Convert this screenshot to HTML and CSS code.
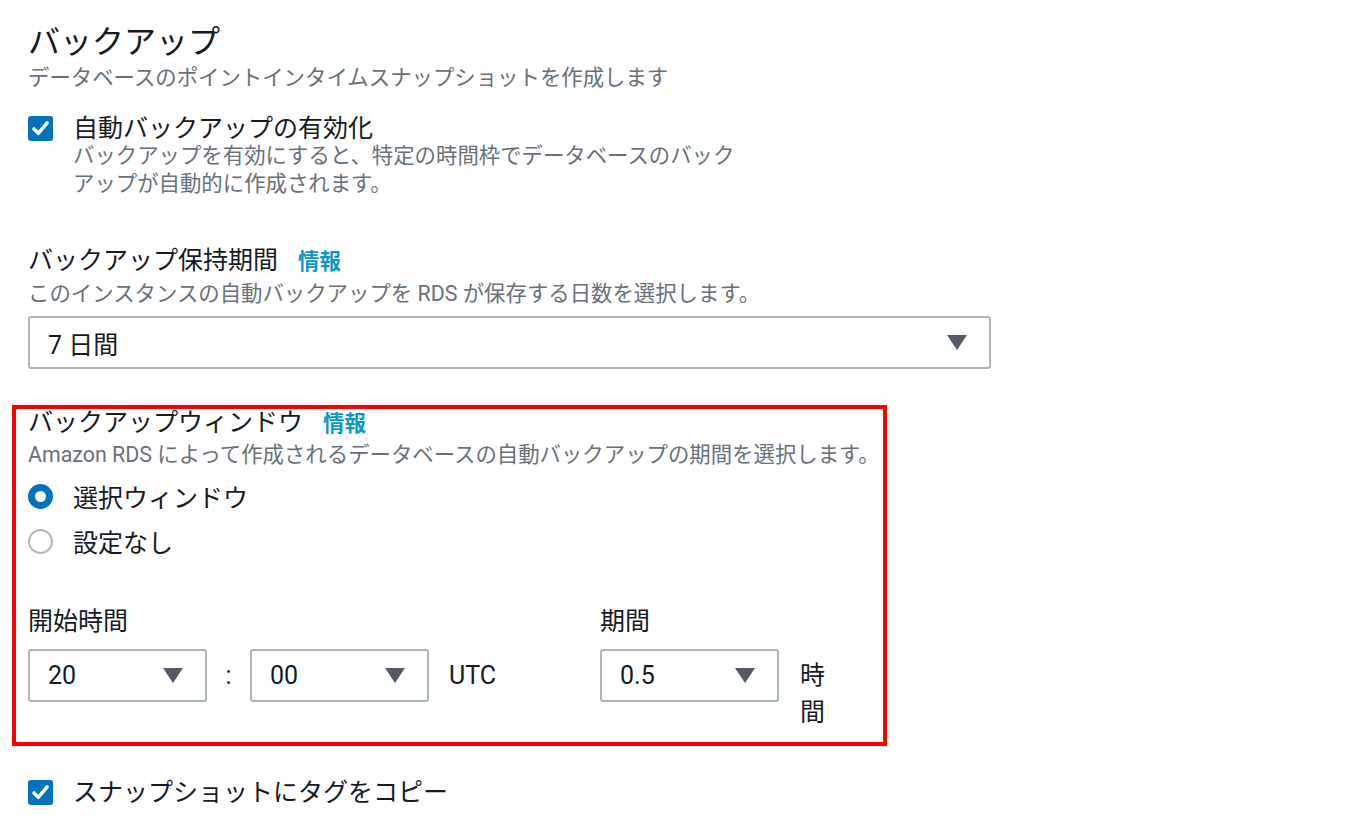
FILE: index.html
```html
<!DOCTYPE html>
<html lang="ja">
<head>
<meta charset="utf-8">
<title>バックアップ</title>
<link rel="stylesheet" href="styles.css">
</head>
<body>
<main class="page">
  <h1 class="title">バックアップ</h1>
  <p class="subtitle">データベースのポイントインタイムスナップショットを作成します</p>

  <div class="check-row first-check">
    <span class="checkbox"><svg viewBox="0 0 24 24" width="21" height="21"><path d="M4.5 12.5 L9.5 17.5 L19.5 5.5" fill="none" stroke="#fff" stroke-width="4" stroke-linecap="round" stroke-linejoin="round"/></svg></span>
    <div class="check-text">
      <div class="check-label">自動バックアップの有効化</div>
      <div class="check-desc">バックアップを有効にすると、特定の時間枠でデータベースのバックアップが自動的に作成されます。</div>
    </div>
  </div>

  <div class="field retention">
    <div class="field-label">バックアップ保持期間<a class="info">情報</a></div>
    <div class="field-desc">このインスタンスの自動バックアップを RDS が保存する日数を選択します。</div>
    <div class="select wide"><span>7 日間</span><span class="arrow"></span></div>
  </div>

  <section class="window-box">
    <div class="field-label">バックアップウィンドウ<a class="info">情報</a></div>
    <div class="field-desc one-line">Amazon RDS によって作成されるデータベースの自動バックアップの期間を選択します。</div>
    <div class="radios">
      <div class="radio-row"><span class="radio on"></span><span class="radio-label">選択ウィンドウ</span></div>
      <div class="radio-row"><span class="radio"></span><span class="radio-label">設定なし</span></div>
    </div>
    <div class="time-grid">
      <div class="start-col">
        <div class="field-label">開始時間</div>
        <div class="control-row">
          <div class="select small"><span>20</span><span class="arrow"></span></div>
          <span class="colon">:</span>
          <div class="select small"><span>00</span><span class="arrow"></span></div>
          <span class="utc">UTC</span>
        </div>
      </div>
      <div class="dur-col">
        <div class="field-label">期間</div>
        <div class="control-row">
          <div class="select small"><span>0.5</span><span class="arrow"></span></div>
          <span class="unit">時間</span>
        </div>
      </div>
    </div>
  </section>

  <div class="check-row last-check">
    <span class="checkbox"><svg viewBox="0 0 24 24" width="21" height="21"><path d="M4.5 12.5 L9.5 17.5 L19.5 5.5" fill="none" stroke="#fff" stroke-width="4" stroke-linecap="round" stroke-linejoin="round"/></svg></span>
    <div class="check-text">
      <div class="check-label">スナップショットにタグをコピー</div>
    </div>
  </div>
</main>
</body>
</html>
```

FILE: styles.css
```css
html, body {
  margin: 0;
  padding: 0;
  background: #ffffff;
}

body {
  font-family: Roboto, "Noto Sans CJK JP", sans-serif;
  color: #16191f;
}

.page {
  padding: 22px 0 0 28px;
}

.title {
  margin: 0;
  font-size: 32px;
  line-height: 40px;
  font-weight: 400;
}

.subtitle {
  margin: 2px 0 0;
  font-size: 21.4px;
  line-height: 28px;
  color: #687078;
}

.check-row {
  display: flex;
  align-items: flex-start;
  gap: 20px;
}

.first-check {
  margin-top: 21px;
}

.checkbox {
  flex: none;
  width: 25px;
  height: 25px;
  margin-top: 3px;
  border-radius: 3px;
  background: #0073bb;
  display: flex;
  align-items: center;
  justify-content: center;
}

.check-label {
  font-size: 25px;
  line-height: 32px;
}

.check-desc {
  width: 670px;
  margin-top: -3px;
  font-size: 21.4px;
  line-height: 28px;
  color: #687078;
}

.retention {
  margin-top: 49px;
}

.field-label {
  font-size: 25px;
  line-height: 28px;
}

.info {
  margin-left: 20px;
  font-size: 21.4px;
  font-weight: 700;
  color: #0a97c9;
}

.field-desc {
  margin-top: 4px;
  font-size: 21.4px;
  line-height: 28px;
  color: #687078;
}

.one-line {
  white-space: nowrap;
}

.select {
  box-sizing: border-box;
  height: 53px;
  border: 2px solid #aab7b8;
  border-radius: 3px;
  display: flex;
  align-items: center;
  justify-content: space-between;
  padding: 0 22px 0 18px;
  font-size: 25px;
}

.select.wide {
  width: 963px;
  margin-top: 8px;
}

.select.small {
  width: 179px;
  flex: none;
}

.arrow {
  width: 0;
  height: 0;
  border-left: 10px solid transparent;
  border-right: 10px solid transparent;
  border-top: 15px solid #545b64;
}

.window-box {
  margin: 36px 0 0 -16px;
  width: 875px;
  box-sizing: border-box;
  border: 4px solid #ff0000;
  padding: 0 0 11px 12px;
}

.window-box .field-desc {
  margin-top: 3px;
}

.radios {
  margin-top: 9px;
  display: flex;
  flex-direction: column;
  gap: 9px;
}

.radio-row {
  display: flex;
  align-items: center;
  gap: 20px;
  height: 36px;
}

.radio {
  box-sizing: border-box;
  width: 25px;
  height: 25px;
  border-radius: 50%;
  border: 2px solid #aab7b8;
  background: #fff;
}

.radio.on {
  border: 7.5px solid #0073bb;
}

.radio-label {
  font-size: 25px;
}

.time-grid {
  margin-top: 49px;
  display: flex;
}

.start-col {
  width: 572px;
}

.control-row {
  margin-top: 13px;
  display: flex;
  align-items: flex-start;
}

.colon {
  width: 43px;
  text-align: center;
  font-size: 25px;
  line-height: 53px;
}

.utc {
  margin-left: 20px;
  font-size: 25px;
  line-height: 53px;
}

.unit {
  width: 26px;
  margin-left: 21px;
  margin-top: 8px;
  font-size: 25px;
  line-height: 37px;
}

.last-check {
  margin-top: 31px;
}
```
